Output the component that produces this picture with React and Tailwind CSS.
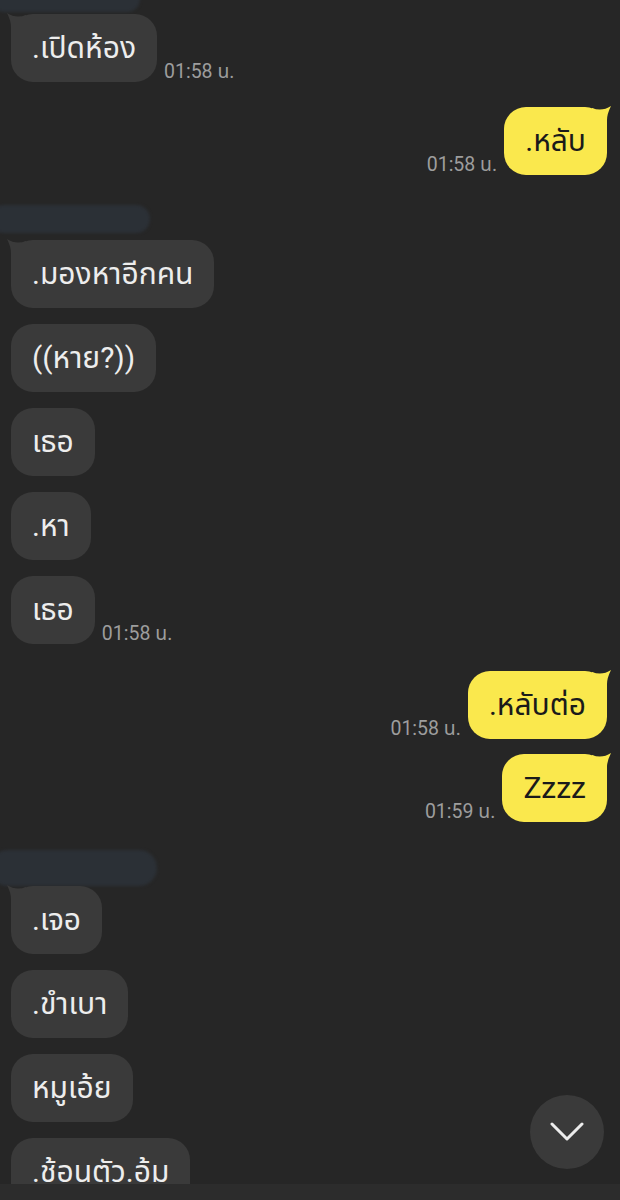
import React from "react";

const FONT = { fontFamily: 'Roboto, "Noto Sans Thai", "Noto Sans", "DejaVu Sans", sans-serif' };

function Tail({ me }) {
  if (me) {
    return (
      <svg className="absolute top-[-1px] right-[-4px] w-[20px] h-[24px]" viewBox="0 0 20 24">
        <path d="M1 2 Q 11 6 20 0 Q 16 8 16 14 L16 24 L1 24 Z" fill="#fae84d" />
      </svg>
    );
  }
  return (
    <svg className="absolute top-[-1px] left-[-4px] w-[20px] h-[24px] scale-x-[-1]" viewBox="0 0 20 24">
      <path d="M1 2 Q 11 6 20 0 Q 16 8 16 14 L16 24 L1 24 Z" fill="#3a3a3a" />
    </svg>
  );
}

function Time({ t }) {
  return <span className="mb-[1px] text-[19.5px] leading-none text-[#9d9d9d] whitespace-nowrap">{t}</span>;
}

function Left({ text, tail, time, className = "" }) {
  return (
    <div className={`flex items-end gap-[7px] pl-[11px] ${className}`}>
      <div className="relative h-[68px] px-[21px] flex items-center rounded-[22px] bg-[#3a3a3a] text-[#ededed] text-[30px] leading-none whitespace-nowrap">
        {tail && <Tail me={false} />}
        <span className="relative">{text}</span>
      </div>
      {time && <Time t={time} />}
    </div>
  );
}

function Right({ text, tail, time, className = "" }) {
  return (
    <div className={`flex items-end justify-end gap-[7px] pr-[13px] ${className}`}>
      {time && <Time t={time} />}
      <div className="relative h-[68px] px-[21px] flex items-center rounded-[22px] bg-[#fae84d] text-[#1a1a1a] text-[30px] leading-none whitespace-nowrap">
        {tail && <Tail me={true} />}
        <span className="relative">{text}</span>
      </div>
    </div>
  );
}

function NamePill({ className = "" }) {
  return <div className={`rounded-full bg-[#2b3036] blur-[1.5px] ${className}`} />;
}

export default function App() {
  return (
    <div className="w-[620px] h-[1200px] bg-[#262626] flex flex-col overflow-hidden" style={FONT}>
      <div className="relative flex-1 overflow-hidden">
        <div className="flex flex-col">
          <NamePill className="mt-[-14px] w-[150px] h-[26px] -ml-[10px]" />
          <Left className="mt-[2px]" text=".เปิดห้อง" tail time="01:58 น." />
          <Right className="mt-[25px]" text=".หลับ" tail time="01:58 น." />
          <NamePill className="mt-[30px] w-[160px] h-[28px] -ml-[10px]" />
          <Left className="mt-[7px]" text=".มองหาอีกคน" tail />
          <Left className="mt-[16px]" text="((หาย?))" />
          <Left className="mt-[16px]" text="เธอ" />
          <Left className="mt-[16px]" text=".หา" />
          <Left className="mt-[16px]" text="เธอ" time="01:58 น." />
          <Right className="mt-[27px]" text=".หลับต่อ" tail time="01:58 น." />
          <Right className="mt-[15px]" text="Zzzz" tail time="01:59 น." />
          <NamePill className="mt-[28px] w-[167px] h-[36px] -ml-[10px]" />
          <Left className="mt-[0px]" text=".เจอ" tail />
          <Left className="mt-[16px]" text=".ขำเบา" />
          <Left className="mt-[16px]" text="หมูเอ้ย" />
          <Left className="mt-[16px]" text=".ช้อนตัว.อ้ม" />
        </div>
        <button className="absolute right-[16px] bottom-[15px] w-[74px] h-[74px] rounded-full bg-[#3a3a3a] flex items-center justify-center">
          <svg width="34" height="20" viewBox="0 0 34 20" fill="none">
            <path d="M2 2 L17 17 L32 2" stroke="#ececec" strokeWidth="3" strokeLinecap="round" strokeLinejoin="round" />
          </svg>
        </button>
      </div>
      <div className="h-[16px] bg-[#2c2c2c]" />
    </div>
  );
}
